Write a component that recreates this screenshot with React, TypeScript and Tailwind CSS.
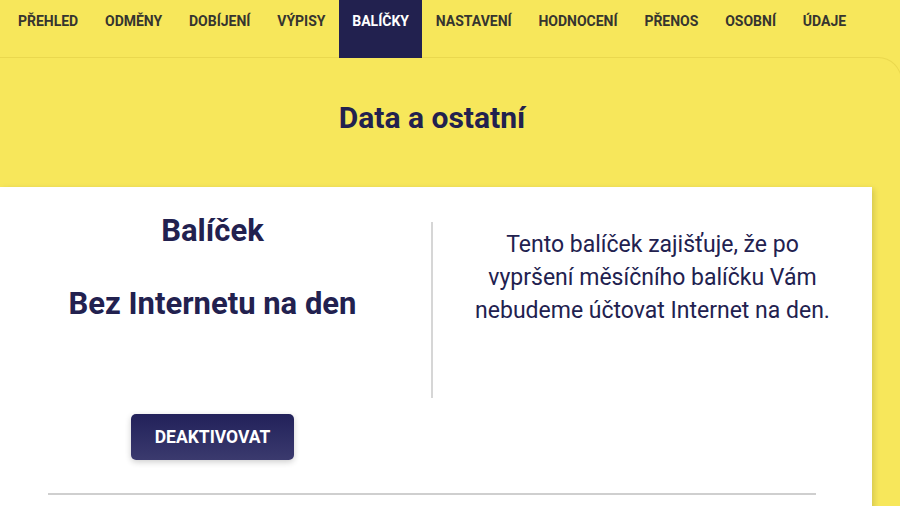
const tabs = [
  "PŘEHLED",
  "ODMĚNY",
  "DOBÍJENÍ",
  "VÝPISY",
  "BALÍČKY",
  "NASTAVENÍ",
  "HODNOCENÍ",
  "PŘENOS",
  "OSOBNÍ",
  "ÚDAJE",
];

export default function App() {
  const active = "BALÍČKY";

  return (
    <div className="h-[506px] w-[900px] overflow-hidden bg-[#f7e75b] font-['Roboto',sans-serif]">
      {/* Top navigation */}
      <nav className="flex h-[57px] pl-[4.5px]">
        {tabs.map((tab) => (
          <a
            key={tab}
            className={
              tab === active
                ? "h-[58px] bg-[#22214f] px-[13.4px] pt-[11px] text-[14px] font-bold leading-[20px] text-white"
                : "h-[57px] px-[13.4px] pt-[11px] text-[14px] font-bold leading-[20px] text-[#36352f]"
            }
          >
            {tab}
          </a>
        ))}
      </nav>

      {/* Content area */}
      <div className="h-[449px] w-[902px] rounded-tr-[24px] border-t border-r border-[#ead84e]">
        <h1 className="w-[864px] pt-[42px] text-center text-[30px] font-bold leading-[36px] text-[#22214f]">
          Data a ostatní
        </h1>

        <div className="mt-[51px] w-[872px] bg-white pt-[25px] pb-[40px] shadow-[2px_2px_6px_rgba(0,0,0,0.15)]">
          <div className="flex">
            <div className="flex w-[425px] flex-col items-center">
              <h2 className="text-[31px] font-bold leading-[38px] text-[#22214f]">Balíček</h2>
              <h2 className="mt-[35px] text-[31px] font-bold leading-[38px] text-[#22214f]">
                Bez Internetu na den
              </h2>
            </div>
            <div className="mt-[10px] ml-[6px] h-[176px] w-[2px] bg-[#d6d6d6]" />
            <p className="mt-[16px] w-[439px] text-center text-[23px] leading-[33px] text-[#22214f]">
              Tento balíček zajišťuje, že po
              <br />
              vypršení měsíčního balíčku Vám
              <br />
              nebudeme účtovat Internet na den.
            </p>
          </div>

          <div className="mt-[16px] flex w-[425px] justify-center">
            <button className="h-[46px] w-[163px] rounded-[5px] bg-gradient-to-b from-[#22215a] to-[#3b3a6e] text-[17.5px] font-bold text-white shadow-[0_2px_6px_rgba(0,0,0,0.2)]">
              DEAKTIVOVAT
            </button>
          </div>

          <div className="mt-[33px] ml-[48px] h-[2px] w-[768px] bg-[#cfcfcf]" />
        </div>
      </div>
    </div>
  );
}
